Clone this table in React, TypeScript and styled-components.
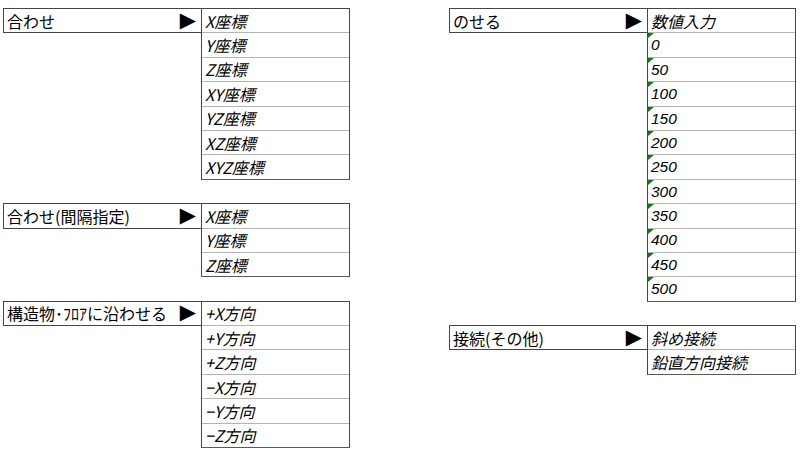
import React from "react";
import styled, { createGlobalStyle } from "styled-components";

const ROW = 24.4;

const Global = createGlobalStyle`
  html, body { margin: 0; padding: 0; background: #ffffff; }
  body {
    width: 800px; height: 452px; overflow: hidden;
    font-family: "Noto Sans CJK JP", sans-serif; color: #000;
  }
`;

const Sheet = styled.div`
  display: flex;
  align-items: flex-start;
  gap: 99px;
  padding: 8px 0 0 3px;
`;

const Column = styled.div`
  display: flex;
  flex-direction: column;
  gap: ${ROW - 1}px;
`;

const Group = styled.div`
  display: flex;
  align-items: flex-start;
`;

const Header = styled.div`
  box-sizing: border-box;
  width: 198px;
  height: ${ROW + 1}px;
  border: 1px solid #464646;
  border-right: none;
  display: flex;
  align-items: center;
  justify-content: space-between;
  padding: 0 5px 0 3px;
  font-size: 16px;
  line-height: 1;
  white-space: nowrap;
`;

const Arrow = styled.span`
  font-family: "DejaVu Sans", sans-serif;
  font-size: 21px;
  line-height: 1;
  margin-top: -1px;
`;

const List = styled.div`
  box-sizing: border-box;
  width: 149px;
  border-left: 1px solid #464646;
  border-right: 1px solid #464646;
  border-bottom: 1px solid #5a5a5a;
  display: flex;
  flex-direction: column;
`;

const Cell = styled.div<{ $num?: boolean }>`
  position: relative;
  box-sizing: border-box;
  height: ${ROW}px;
  border-top: 1px solid #b4b4b4;
  display: flex;
  align-items: center;
  padding-left: 3px;
  font-family: ${(p) =>
    p.$num ? `"Liberation Sans", "Noto Sans CJK JP", sans-serif` : `"Noto Sans CJK JP", sans-serif`};
  font-style: italic;
  font-size: ${(p) => (p.$num ? 15.5 : 16)}px;
  line-height: 1;
  white-space: nowrap;
  &:first-child { border-top-color: #464646; }
  ${(p) =>
    p.$num
      ? `&::before {
          content: "";
          position: absolute;
          top: 0; left: 0;
          border-top: 5px solid #0f7a0f;
          border-right: 6px solid transparent;
        }`
      : ""}
`;

type G = { title: string; items: string[]; numFrom?: number };

const left: G[] = [
  { title: "合わせ", items: ["X座標", "Y座標", "Z座標", "XY座標", "YZ座標", "XZ座標", "XYZ座標"] },
  { title: "合わせ(間隔指定)", items: ["X座標", "Y座標", "Z座標"] },
  { title: "構造物･ﾌﾛｱに沿わせる", items: ["+X方向", "+Y方向", "+Z方向", "−X方向", "−Y方向", "−Z方向"] },
];

const right: G[] = [
  {
    title: "のせる",
    items: ["数値入力", "0", "50", "100", "150", "200", "250", "300", "350", "400", "450", "500"],
    numFrom: 1,
  },
  { title: "接続(その他)", items: ["斜め接続", "鉛直方向接続"] },
];

const MenuGroup = ({ g }: { g: G }) => (
  <Group>
    <Header>
      <span>{g.title}</span>
      <Arrow>▶</Arrow>
    </Header>
    <List>
      {g.items.map((it, i) => (
        <Cell key={i} $num={g.numFrom !== undefined && i >= g.numFrom}>
          {it}
        </Cell>
      ))}
    </List>
  </Group>
);

export default function App() {
  return (
    <>
      <Global />
      <Sheet>
        <Column>
          {left.map((g, i) => (
            <MenuGroup key={i} g={g} />
          ))}
        </Column>
        <Column>
          {right.map((g, i) => (
            <MenuGroup key={i} g={g} />
          ))}
        </Column>
      </Sheet>
    </>
  );
}
